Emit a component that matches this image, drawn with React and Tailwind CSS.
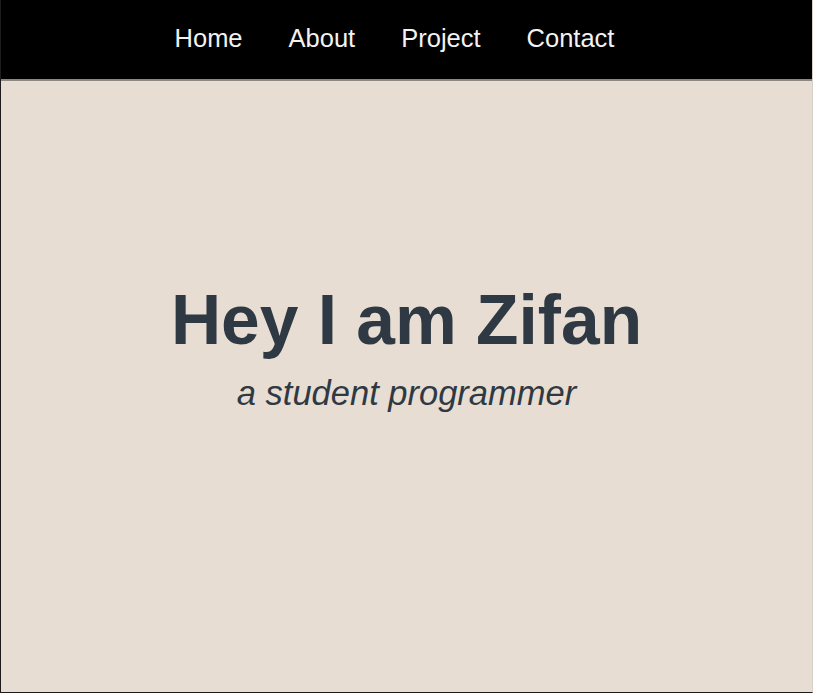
function App() {
    const links = ['Home', 'About', 'Project', 'Contact'];

    return (
        <div className="h-[693px] w-[813px] flex flex-col bg-[#e7ddd2] border-l border-b border-[#1c1c1c] border-r border-r-[#d6d0c9] font-['Liberation_Sans',Arial,sans-serif]">
            {/* NAV */}
            <nav className="h-[81px] shrink-0 bg-black border-b-2 border-[#8c8781] flex items-center justify-center gap-[46px] pr-[24px] pb-[2px]">
                {links.map((l) => (
                    <a key={l} href="#" className="text-[25.5px] text-[#f2f2f2] leading-none">
                        {l}
                    </a>
                ))}
            </nav>

            {/* HERO */}
            <main className="flex-1 flex flex-col items-center pt-[205px]">
                <h1 className="text-[69.5px] font-bold leading-none text-[#2f3943]">Hey I am Zifan</h1>
                <p className="mt-[20px] text-[34.5px] italic leading-none text-[#2f3943]">a student programmer</p>
            </main>
        </div>
    );
}

export default App;
